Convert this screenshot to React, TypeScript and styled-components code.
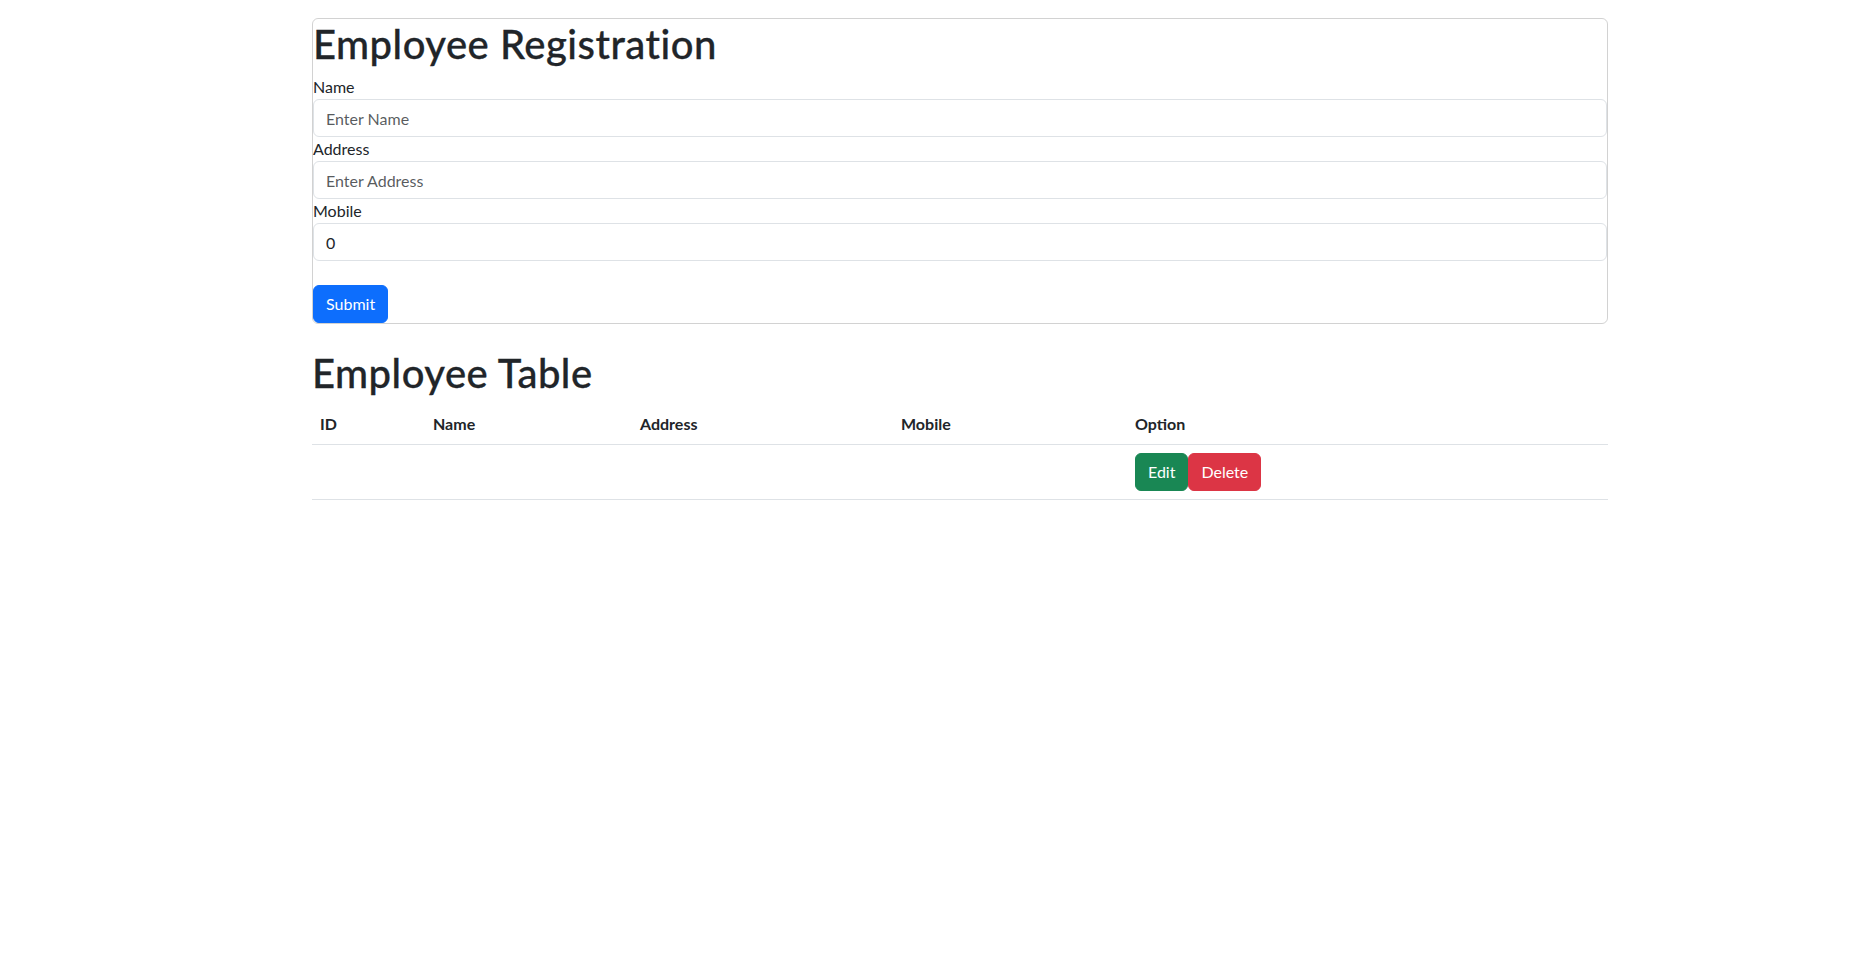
import React from "react";
import styled, { createGlobalStyle } from "styled-components";

const GlobalStyle = createGlobalStyle`
  *, *::before, *::after { box-sizing: border-box; }
  body {
    margin: 0;
    background: #fff;
    color: #212529;
    font-family: "Segoe UI", Lato, "Liberation Sans", sans-serif;
    font-size: 16px;
    line-height: 1.5;
  }
`;

const Page = styled.div`
  width: 1296px;
  margin: 18px 0 0 312px;
`;

const Card = styled.form`
  display: flex;
  flex-direction: column;
  align-items: stretch;
  border: 1px solid rgba(0, 0, 0, 0.175);
  border-radius: 6px;
`;

const Heading = styled.h1<{ $top?: number }>`
  margin: ${(p) => p.$top ?? 0}px 0 7px;
  padding-top: 1px;
  font-size: 40px;
  font-weight: 500;
  line-height: 1.2;
  letter-spacing: 0.5px;
  -webkit-text-stroke: 0.3px #212529;
  color: #212529;
`;

const Label = styled.label`
  display: block;
  font-size: 16px;
  line-height: 24px;
`;

const Input = styled.input`
  display: block;
  width: 100%;
  height: 38px;
  padding: 6px 12px;
  font-family: inherit;
  font-size: 16px;
  line-height: 1.5;
  color: #212529;
  background: #fff;
  border: 1px solid #dee2e6;
  border-radius: 6px;
  outline: none;
  &::placeholder { color: rgba(33, 37, 41, 0.75); opacity: 1; }
`;

const Button = styled.button<{ $variant: "primary" | "success" | "danger"; $top?: number }>`
  align-self: flex-start;
  margin-top: ${(p) => p.$top ?? 0}px;
  height: 38px;
  padding: 6px 12px;
  font-family: inherit;
  font-size: 16px;
  line-height: 1.5;
  color: #fff;
  border-radius: 6px;
  cursor: pointer;
  background: ${(p) =>
    p.$variant === "primary" ? "#0d6efd" : p.$variant === "success" ? "#198754" : "#dc3545"};
  border: 1px solid
    ${(p) => (p.$variant === "primary" ? "#0d6efd" : p.$variant === "success" ? "#198754" : "#dc3545")};
`;

const Table = styled.table`
  width: 100%;
  table-layout: fixed;
  border-collapse: collapse;
  margin-bottom: 16px;
`;

const Th = styled.th<{ $w?: number }>`
  width: ${(p) => (p.$w ? `${p.$w}px` : "auto")};
  padding: 8px;
  text-align: left;
  font-weight: 700;
  line-height: 24px;
  vertical-align: bottom;
  border-bottom: 1px solid #dee2e6;
`;

const Td = styled.td`
  padding: 8px;
  line-height: 24px;
  vertical-align: middle;
  border-bottom: 1px solid #dee2e6;
`;

const Actions = styled.div`
  display: flex;
`;

export default function App() {
  return (
    <>
      <GlobalStyle />
      <Page>
        <Card onSubmit={(e) => e.preventDefault()}>
          <Heading>Employee Registration</Heading>
          <Label>Name</Label>
          <Input type="text" placeholder="Enter Name" />
          <Label>Address</Label>
          <Input type="text" placeholder="Enter Address" />
          <Label>Mobile</Label>
          <Input type="text" defaultValue="0" />
          <Button $variant="primary" $top={24} type="submit">
            Submit
          </Button>
        </Card>

        <Heading $top={24}>Employee Table</Heading>
        <Table>
          <thead>
            <tr>
              <Th $w={113}>ID</Th>
              <Th $w={207}>Name</Th>
              <Th $w={261}>Address</Th>
              <Th $w={234}>Mobile</Th>
              <Th>Option</Th>
            </tr>
          </thead>
          <tbody>
            <tr>
              <Td></Td>
              <Td></Td>
              <Td></Td>
              <Td></Td>
              <Td>
                <Actions>
                  <Button $variant="success" type="button">Edit</Button>
                  <Button $variant="danger" type="button">Delete</Button>
                </Actions>
              </Td>
            </tr>
          </tbody>
        </Table>
      </Page>
    </>
  );
}
